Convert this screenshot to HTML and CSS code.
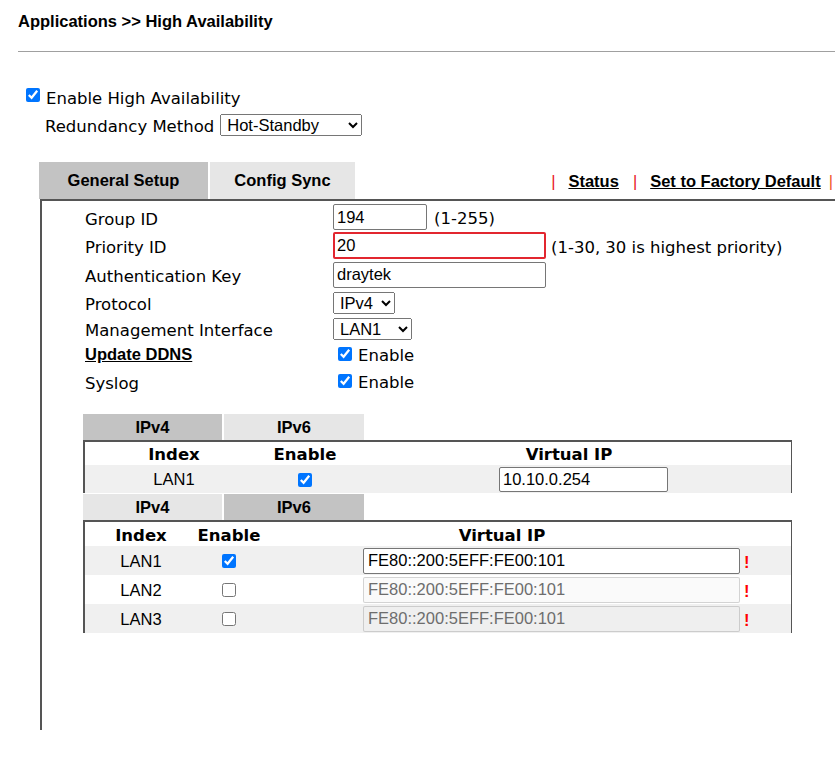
FILE: index.html
```html
<!DOCTYPE html>
<html lang="en">
<head>
    <meta charset="UTF-8">
    <title>Applications &gt;&gt; High Availability</title>
    <link rel="stylesheet" href="styles.css">
</head>
<body>
<div class="page">
    <h1 class="title">Applications &gt;&gt; High Availability</h1>
    <hr class="rule">

    <label class="enable_ha"><input type="checkbox" class="cb" checked>Enable High Availability</label>
    <div class="method">
        <span>Redundancy Method</span>
        <select class="sel sel_method"><option>Hot-Standby</option><option>Active-Standby</option></select>
    </div>

    <div class="tabbar">
        <div class="tab tab_on tab_general">General Setup</div>
        <div class="tab tab_sync">Config Sync</div>
        <div class="links">
            <span class="sep">|</span><a class="lnk" href="#">Status</a><span class="sep">|</span><a class="lnk" href="#">Set to Factory Default</a><span class="sep sep_end">|</span>
        </div>
    </div>

    <div class="panel">
        <div class="form">
            <span class="lbl">Group ID</span>
            <div class="ctl"><input class="txt w_group" value="194"><span class="hint">(1-255)</span></div>

            <span class="lbl">Priority ID</span>
            <div class="ctl"><input class="txt w_long txt_err" value="20"><span class="hint">(1-30, 30 is highest priority)</span></div>

            <span class="lbl">Authentication Key</span>
            <div class="ctl"><input class="txt w_long" value="draytek"></div>

            <span class="lbl">Protocol</span>
            <div class="ctl"><select class="sel sel_proto"><option>IPv4</option><option>IPv6</option></select></div>

            <span class="lbl">Management Interface</span>
            <div class="ctl"><select class="sel sel_lan"><option>LAN1</option><option>LAN2</option></select></div>

            <a class="lbl lbl_link" href="#">Update DDNS</a>
            <label class="ctl chk"><input type="checkbox" class="cb" checked><span>Enable</span></label>

            <span class="lbl">Syslog</span>
            <label class="ctl chk"><input type="checkbox" class="cb" checked><span>Enable</span></label>
        </div>

        <div class="subtabs">
            <div class="stab stab_on">IPv4</div>
            <div class="stab">IPv6</div>
        </div>
        <table class="vt vt4">
            <tr class="vt_head">
                <th class="c_idx">Index</th>
                <th class="c_en">Enable</th>
                <th>Virtual IP</th>
            </tr>
            <tr class="vt_row alt">
                <td>LAN1</td>
                <td><input type="checkbox" class="cb" checked></td>
                <td class="c_ip"><input class="txt ip4" value="10.10.0.254"></td>
            </tr>
        </table>

        <div class="subtabs subtabs_second">
            <div class="stab">IPv4</div>
            <div class="stab stab_on">IPv6</div>
        </div>
        <table class="vt vt6">
            <tr class="vt_head">
                <th class="c_idx">Index</th>
                <th class="c_en">Enable</th>
                <th class="c_vip">Virtual IP</th>
                <th></th>
            </tr>
            <tr class="vt_row alt">
                <td>LAN1</td>
                <td><input type="checkbox" class="cb" checked></td>
                <td class="c_ip"><input class="txt ip6" value="FE80::200:5EFF:FE00:101"></td>
                <td class="c_warn">!</td>
            </tr>
            <tr class="vt_row">
                <td>LAN2</td>
                <td><input type="checkbox" class="cb"></td>
                <td class="c_ip"><input class="txt ip6" value="FE80::200:5EFF:FE00:101" disabled></td>
                <td class="c_warn">!</td>
            </tr>
            <tr class="vt_row alt">
                <td>LAN3</td>
                <td><input type="checkbox" class="cb"></td>
                <td class="c_ip"><input class="txt ip6" value="FE80::200:5EFF:FE00:101" disabled></td>
                <td class="c_warn">!</td>
            </tr>
        </table>
    </div>
</div>
</body>
</html>
```

FILE: styles.css
```css
* {
    box-sizing: border-box;
}
body {
    margin: 0;
    font-family: "DejaVu Sans", Verdana, sans-serif;
    font-size: 16.5px;
    color: #000;
    background: #fff;
    overflow: hidden;
}
.page {
    width: 835px;
    overflow: hidden;
}
.title {
    margin: 12px 0 0 18px;
    font: bold 16.5px/19px "Liberation Sans", Arial, sans-serif;
}
.rule {
    margin: 20px 0 0 18px;
    height: 0;
    border: 0;
    border-top: 1px solid #a0a0a0;
}
.cb {
    width: 14px;
    height: 14px;
    margin: 0;
}
.enable_ha {
    display: flex;
    align-items: center;
    height: 20px;
    margin: 36px 0 0 26px;
}
.enable_ha .cb {
    margin: 0 6px 6px 0;
}
.method {
    display: flex;
    align-items: center;
    gap: 6px;
    height: 22px;
    margin: 6px 0 0 45px;
}
.method span {
    padding-top: 2px;
}
.sel {
    height: 22px;
    padding: 0 0 0 2px;
    font: 16.5px "Liberation Sans", Arial, sans-serif;
    color: #000;
}
.sel_method {
    width: 142px;
}
.sel_proto {
    width: 62px;
}
.sel_lan {
    width: 79px;
}

/* main tabs */
.tabbar {
    display: flex;
    gap: 2px;
    height: 37px;
    margin: 26px 0 0 39px;
    font: bold 16.5px "Liberation Sans", Arial, sans-serif;
}
.tab {
    display: flex;
    align-items: center;
    justify-content: center;
    background: #e6e6e6;
}
.tab_on {
    background: #c3c3c3;
}
.tab_general {
    width: 169px;
}
.tab_sync {
    width: 145px;
}
.links {
    display: flex;
    align-items: center;
    margin-left: auto;
    padding: 1px 2px 0 0;
}
.lnk {
    color: #000;
    text-decoration: underline;
    margin-right: 14px;
}
.sep {
    font-weight: normal;
    color: #e8141e;
    margin-right: 13px;
}
.sep_end {
    color: #f25a28;
    margin: 0 0 0 -6px;
}

/* panel */
.panel {
    margin: 0 -20px 0 40px;
    padding: 2px 0 97px 0;
    border-top: 2px solid #555;
    border-left: 2px solid #555;
}
.form {
    display: grid;
    grid-template-columns: 248px 1fr;
    grid-template-rows: 28px 29px 29px 27px 25px 26px 28px;
    align-items: center;
    margin-left: 43px;
}
.lbl {
    padding-top: 4px;
}
.lbl_link {
    color: #000;
    font: bold 16.5px "Liberation Sans", Arial, sans-serif;
    text-decoration: underline;
    padding-top: 0;
}
.ctl {
    display: flex;
    align-items: center;
}
.chk .cb {
    margin: 0 6px 0 5px;
}
.chk span {
    padding-top: 3px;
}
.hint {
    padding-top: 3px;
}
.txt {
    height: 26px;
    padding: 0 3px;
    border: 1px solid #767676;
    border-radius: 2px;
    font: 16.5px "Liberation Sans", Arial, sans-serif;
    color: #000;
    background: #fff;
}
.txt:disabled {
    color: #6d6d6d;
    background: rgba(239, 239, 239, 0.3);
    border-color: rgba(118, 118, 118, 0.3);
}
.w_group {
    width: 94px;
    margin-right: 7px;
}
.w_long {
    width: 213px;
    margin-right: 5px;
}
.txt_err {
    height: 27px;
    border: 2px solid #e2262f;
    padding: 0 2px;
}

/* ip tables */
.subtabs {
    display: flex;
    gap: 2px;
    margin: 19px 0 0 41px;
    font: bold 16.5px "Liberation Sans", Arial, sans-serif;
}
.subtabs_second {
    margin-top: 1px;
}
.stab {
    display: flex;
    align-items: center;
    justify-content: center;
    width: 139px;
    height: 26px;
    background: #e6e6e6;
}
.stab + .stab {
    width: 140px;
}
.stab_on {
    background: #c3c3c3;
}
.vt {
    width: 709px;
    margin-left: 41px;
    border-collapse: separate;
    border-spacing: 0;
    border-top: 2px solid #555;
    border-left: 2px solid #555;
    border-right: 1px solid #555;
    table-layout: fixed;
}
.vt th {
    height: 23px;
    padding: 2px 0 0;
    font: bold 16.5px "DejaVu Sans", Verdana, sans-serif;
    text-align: center;
    vertical-align: middle;
}
.vt td {
    padding: 1px 0 0;
    text-align: center;
    vertical-align: middle;
    font: 16.5px "Liberation Sans", Arial, sans-serif;
}
.vt_row td {
    height: 28px;
}
.vt6 th {
    height: 24px;
}
.vt6 .vt_row td {
    height: 29px;
}
.alt td {
    background: #f0f0f0;
}
.vt td .cb {
    display: block;
    margin: 0 auto;
}
.vt4 .c_idx {
    width: 178px;
}
.vt4 .c_en {
    width: 84px;
}
.vt6 .c_idx {
    width: 112px;
}
.vt6 .c_en {
    width: 64px;
}
.vt6 .c_vip {
    width: 482px;
}
.vt td.c_ip {
    text-align: left;
    padding-top: 0;
}
.ip4 {
    display: block;
    width: 169px;
    height: 25px;
    margin-left: 152px;
}
.ip6 {
    display: block;
    width: 377px;
    height: 26px;
    margin-left: 102px;
    padding: 0 4px;
}
.vt td.c_warn {
    text-align: left;
    padding: 3px 0 0 1px;
    color: #f00;
    font-weight: bold;
}
```
